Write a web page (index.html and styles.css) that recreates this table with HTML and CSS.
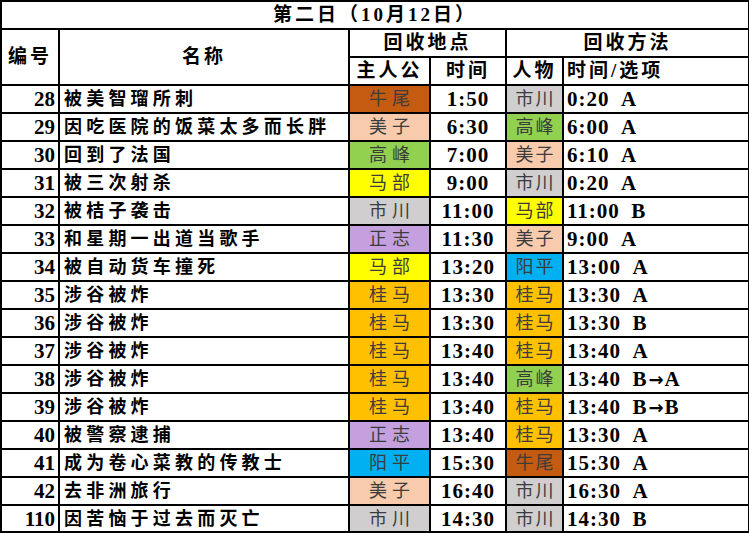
FILE: index.html
```html
<!DOCTYPE html>
<html lang="zh">
<head>
<meta charset="utf-8">
<title>第二日（10月12日）</title>
<link rel="stylesheet" href="styles.css">
</head>
<body>
<table class="sheet">
  <colgroup>
    <col class="c-no"><col class="c-name"><col class="c-who"><col class="c-time"><col class="c-who2"><col class="c-opt">
  </colgroup>
  <thead>
    <tr><th colspan="6" class="title">第二日（10月12日）</th></tr>
    <tr>
      <th rowspan="2" class="hd">编号</th>
      <th rowspan="2" class="hd">名称</th>
      <th colspan="2" class="hd">回收地点</th>
      <th colspan="2" class="hd">回收方法</th>
    </tr>
    <tr>
      <th class="hd">主人公</th>
      <th class="hd">时间</th>
      <th class="hd">人物</th>
      <th class="hd left">时间/选项</th>
    </tr>
  </thead>
  <tbody>
    <tr><td class="no">28</td><td class="name">被美智瑠所刺</td><td class="who c-ushio">牛尾</td><td class="tm">1:50</td><td class="who2 c-ichi">市川</td><td class="opt">0:20&ensp;A</td></tr>
    <tr><td class="no">29</td><td class="name">因吃医院的饭菜太多而长胖</td><td class="who c-miko">美子</td><td class="tm">6:30</td><td class="who2 c-taka">高峰</td><td class="opt">6:00&ensp;A</td></tr>
    <tr><td class="no">30</td><td class="name">回到了法国</td><td class="who c-taka">高峰</td><td class="tm">7:00</td><td class="who2 c-miko">美子</td><td class="opt">6:10&ensp;A</td></tr>
    <tr><td class="no">31</td><td class="name">被三次射杀</td><td class="who c-mabe">马部</td><td class="tm">9:00</td><td class="who2 c-ichi">市川</td><td class="opt">0:20&ensp;A</td></tr>
    <tr><td class="no">32</td><td class="name">被桔子袭击</td><td class="who c-ichi">市川</td><td class="tm">11:00</td><td class="who2 c-mabe">马部</td><td class="opt">11:00&ensp;B</td></tr>
    <tr><td class="no">33</td><td class="name">和星期一出道当歌手</td><td class="who c-masa">正志</td><td class="tm">11:30</td><td class="who2 c-miko">美子</td><td class="opt">9:00&ensp;A</td></tr>
    <tr><td class="no">34</td><td class="name">被自动货车撞死</td><td class="who c-mabe">马部</td><td class="tm">13:20</td><td class="who2 c-you">阳平</td><td class="opt">13:00&ensp;A</td></tr>
    <tr><td class="no">35</td><td class="name">涉谷被炸</td><td class="who c-kei">桂马</td><td class="tm">13:30</td><td class="who2 c-kei">桂马</td><td class="opt">13:30&ensp;A</td></tr>
    <tr><td class="no">36</td><td class="name">涉谷被炸</td><td class="who c-kei">桂马</td><td class="tm">13:30</td><td class="who2 c-kei">桂马</td><td class="opt">13:30&ensp;B</td></tr>
    <tr><td class="no">37</td><td class="name">涉谷被炸</td><td class="who c-kei">桂马</td><td class="tm">13:40</td><td class="who2 c-kei">桂马</td><td class="opt">13:40&ensp;A</td></tr>
    <tr><td class="no">38</td><td class="name">涉谷被炸</td><td class="who c-kei">桂马</td><td class="tm">13:40</td><td class="who2 c-taka">高峰</td><td class="opt">13:40&ensp;B<span class="arrow">→</span>A</td></tr>
    <tr><td class="no">39</td><td class="name">涉谷被炸</td><td class="who c-kei">桂马</td><td class="tm">13:40</td><td class="who2 c-kei">桂马</td><td class="opt">13:40&ensp;B<span class="arrow">→</span>B</td></tr>
    <tr><td class="no">40</td><td class="name">被警察逮捕</td><td class="who c-masa">正志</td><td class="tm">13:40</td><td class="who2 c-kei">桂马</td><td class="opt">13:30&ensp;A</td></tr>
    <tr><td class="no">41</td><td class="name">成为卷心菜教的传教士</td><td class="who c-you">阳平</td><td class="tm">15:30</td><td class="who2 c-ushio">牛尾</td><td class="opt">15:30&ensp;A</td></tr>
    <tr><td class="no">42</td><td class="name">去非洲旅行</td><td class="who c-miko">美子</td><td class="tm">16:40</td><td class="who2 c-ichi">市川</td><td class="opt">16:30&ensp;A</td></tr>
    <tr class="last"><td class="no">110</td><td class="name">因苦恼于过去而灭亡</td><td class="who c-ichi">市川</td><td class="tm">14:30</td><td class="who2 c-ichi">市川</td><td class="opt">14:30&ensp;B</td></tr>
  </tbody>
</table>
</body>
</html>
```

FILE: styles.css
```css
html, body {
  margin: 0;
  padding: 0;
  background: #ffffff;
}

.sheet {
  border-collapse: collapse;
  table-layout: fixed;
  width: 748px;
  margin-left: 0;
  font-family: "Liberation Serif", "Noto Sans CJK SC", serif;
  font-weight: 700;
  font-size: 19px;
  color: #000;
}

.c-no { width: 58px; }
.c-name { width: 290px; }
.c-who { width: 81px; }
.c-time { width: 76px; }
.c-who2 { width: 57px; }
.c-opt { width: 186px; }

.sheet tr { height: 28px; }

.sheet th,
.sheet td {
  border: 2px solid #000;
  padding: 0;
  height: 26px;
  line-height: 20px;
  vertical-align: middle;
  white-space: nowrap;
  overflow: hidden;
}

.sheet tr.last { height: 27px; }

.sheet tr.last td { height: 25px; }

.sheet th {
  text-align: center;
  letter-spacing: 3px;
}

.sheet th.left {
  text-align: left;
  padding-left: 3px;
}

.title {
  letter-spacing: 1px;
}

.no {
  text-align: right;
  padding-right: 3px !important;
  font-size: 21px;
}

.name {
  text-align: left;
  padding-left: 4px !important;
  font-size: 18px;
  letter-spacing: 4.2px;
}

.who,
.who2 {
  text-align: center;
  font-weight: 400;
  color: #3c3c3c;
  font-size: 18px;
}

.who {
  letter-spacing: 5px;
  padding-left: 5px !important;
}

.who2 {
  letter-spacing: 2px;
  padding-left: 2px !important;
}

.tm {
  text-align: center;
  font-size: 21px;
  letter-spacing: 1px;
}

.opt {
  text-align: left;
  padding-left: 3px !important;
  font-size: 21px;
  letter-spacing: 1px;
}

.arrow {
  font-family: "DejaVu Sans", sans-serif;
  font-size: 18px;
  line-height: 0;
  letter-spacing: 0;
  margin: 0 1px;
}

.c-ushio { background: #c55a11; }
.c-miko { background: #f8cbad; }
.c-taka { background: #92d050; }
.c-mabe { background: #ffff00; }
.c-ichi { background: #d0cece; }
.c-masa { background: #c5a0de; }
.c-you { background: #00b0f0; }
.c-kei { background: #ffc000; }
```
